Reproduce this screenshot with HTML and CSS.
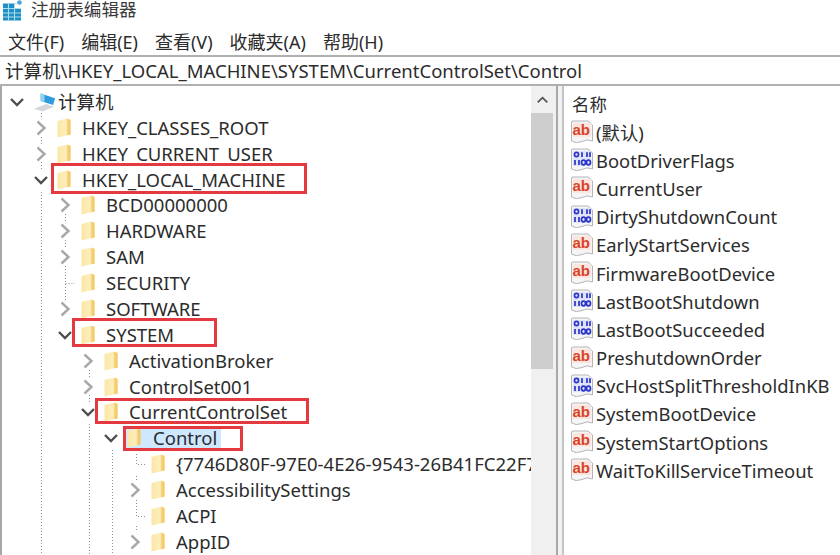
FILE: index.html
```html
<!DOCTYPE html>
<html lang="zh-CN">
<head>
<meta charset="utf-8">
<title>注册表编辑器</title>
<link rel="stylesheet" href="styles.css">
</head>
<body>
<svg class="defs" width="0" height="0" aria-hidden="true">
  <defs>
    <linearGradient id="fg" x1="0" y1="0" x2="1" y2="0">
      <stop offset="0" stop-color="#fbe6a6"/><stop offset="0.6" stop-color="#fdeebb"/><stop offset="1" stop-color="#f6d27a"/>
    </linearGradient>
    <symbol id="folder" viewBox="0 0 14 20">
      <path d="M0.5 3 L6 1.5 L11 0.5 L13.5 2 L13.5 16.5 L0.5 19.5 Z" fill="url(#fg)"/>
      <path d="M10.5 1 L13.5 2 L13.5 16.5 L10.5 17.2 Z" fill="#f4cc6c"/>
    </symbol>
    <symbol id="chev-r" viewBox="0 0 12 16">
      <path d="M2.5 1.5 L9.5 8 L2.5 14.5" fill="none" stroke="#a8a8a8" stroke-width="2.4"/>
    </symbol>
    <symbol id="chev-d" viewBox="0 0 16 12">
      <path d="M2 3 L8 9 L14 3" fill="none" stroke="#4e4e4e" stroke-width="2.4"/>
    </symbol>
    <symbol id="reg-paper" viewBox="0 0 24 24">
      <path d="M1.5 2 Q1.5 1 3 1 L18 1 L22.5 5 L22.5 21 Q17 18.5 12 21.5 Q6 24 1.5 21 Z" fill="#f5f5f7" stroke="#b5b5b8" stroke-width="1"/>
    </symbol>
    <symbol id="reg-sz" viewBox="0 0 24 24">
      <use href="#reg-paper"/>
      <rect x="3" y="3" width="18" height="14" fill="#fbe6df"/>
      <text x="2.5" y="15" class="ab-text">ab</text>
    </symbol>
    <symbol id="reg-bin" viewBox="0 0 24 24">
      <use href="#reg-paper"/>
      <rect x="3" y="3" width="18" height="15" fill="#dfe3fa"/>
      <g fill="none" stroke="#2a35c8" stroke-width="1.7">
        <ellipse cx="6.5" cy="6.5" rx="2" ry="2.2"/>
        <path d="M12 4.2 V9 M17 4.2 V9 M20 4.2 V9"/>
        <path d="M5 12 V17 M9 12 V17"/>
        <ellipse cx="13.5" cy="14.5" rx="2" ry="2.3"/>
        <ellipse cx="18.5" cy="14.5" rx="2" ry="2.3"/>
      </g>
    </symbol>
  </defs>
</svg>

<header class="titlebar">
  <svg class="app-icon" viewBox="0 0 20 21" width="20" height="21" aria-hidden="true">
    <rect x="1" y="3.5" width="18" height="17" fill="#1e8fc4"/>
    <path d="M1 8.5 H19 M1 13 H19 M1 17 H19 M6.5 3.5 V20.5 M12.5 3.5 V20.5" stroke="#a9dcef" stroke-width="1.1"/>
    <rect x="13" y="3.5" width="6" height="4.5" fill="#fff"/>
    <circle cx="17.5" cy="2.5" r="2.3" fill="#4aa7d6"/>
  </svg>
  <span class="title-text">注册表编辑器</span>
</header>

<nav class="menubar">
  <span>文件(F)</span><span>编辑(E)</span><span>查看(V)</span><span>收藏夹(A)</span><span>帮助(H)</span>
</nav>

<div class="address">计算机\HKEY_LOCAL_MACHINE\SYSTEM\CurrentControlSet\Control</div>

<main class="panes">
  <section class="tree">
    <svg class="guides" width="531" height="470" aria-hidden="true">
      <g fill="none" stroke="#8e8e8e" stroke-dasharray="1 2">
        <path d="M41.5 27 V33 M41.5 51 V58 M41.5 76 V84 M41.5 106 V470"/>
        <path d="M65.5 128 V136 M65.5 154 V162 M65.5 180 V215 M65.5 197.5 H75"/>
        <path d="M89.5 284 V291 M89.5 309 V317 M89.5 338 V470"/>
        <path d="M112.5 364 V470"/>
        <path d="M136.5 368 V378.5 H146 M136.5 390 V396 M136.5 414 V430.5 H146 M136.5 440 V446"/>
      </g>
    </svg>

    <div class="row root">
      <svg class="chev"><use href="#chev-d"/></svg>
      <svg class="pc" viewBox="0 0 24 20" width="23" height="20" aria-hidden="true">
        <path d="M8 1 L23 6 L21 13 L8 9 Z" fill="#2f9bdc"/>
        <path d="M8 1 L12 2 L12 10 L8 9 Z" fill="#8fd2f2"/>
        <path d="M1 17 L14 12 L22 15 L10 20 Z" fill="#d4d8dc"/>
      </svg>
      <span class="label">计算机</span>
    </div>

    <div class="row l1"><svg class="chev"><use href="#chev-r"/></svg><svg class="folder"><use href="#folder"/></svg><span class="label">HKEY_CLASSES_ROOT</span></div>
    <div class="row l1"><svg class="chev"><use href="#chev-r"/></svg><svg class="folder"><use href="#folder"/></svg><span class="label">HKEY_CURRENT_USER</span></div>
    <div class="row l1"><svg class="chev"><use href="#chev-d"/></svg><svg class="folder"><use href="#folder"/></svg><span class="label">HKEY_LOCAL_MACHINE</span><i class="mark m-hklm"></i></div>
    <div class="row l2"><svg class="chev"><use href="#chev-r"/></svg><svg class="folder"><use href="#folder"/></svg><span class="label">BCD00000000</span></div>
    <div class="row l2"><svg class="chev"><use href="#chev-r"/></svg><svg class="folder"><use href="#folder"/></svg><span class="label">HARDWARE</span></div>
    <div class="row l2"><svg class="chev"><use href="#chev-r"/></svg><svg class="folder"><use href="#folder"/></svg><span class="label">SAM</span></div>
    <div class="row l2"><span class="chev"></span><svg class="folder"><use href="#folder"/></svg><span class="label">SECURITY</span></div>
    <div class="row l2"><svg class="chev"><use href="#chev-r"/></svg><svg class="folder"><use href="#folder"/></svg><span class="label">SOFTWARE</span></div>
    <div class="row l2"><svg class="chev"><use href="#chev-d"/></svg><svg class="folder"><use href="#folder"/></svg><span class="label">SYSTEM</span><i class="mark m-system"></i></div>
    <div class="row l3"><svg class="chev"><use href="#chev-r"/></svg><svg class="folder"><use href="#folder"/></svg><span class="label">ActivationBroker</span></div>
    <div class="row l3"><svg class="chev"><use href="#chev-r"/></svg><svg class="folder"><use href="#folder"/></svg><span class="label">ControlSet001</span></div>
    <div class="row l3"><svg class="chev"><use href="#chev-d"/></svg><svg class="folder"><use href="#folder"/></svg><span class="label">CurrentControlSet</span><i class="mark m-ccs"></i></div>
    <div class="row l4"><svg class="chev"><use href="#chev-d"/></svg><span class="selected"><svg class="folder"><use href="#folder"/></svg><span class="label">Control</span></span><i class="mark m-control"></i></div>
    <div class="row l5"><span class="chev"></span><svg class="folder"><use href="#folder"/></svg><span class="label">{7746D80F-97E0-4E26-9543-26B41FC22F79}</span></div>
    <div class="row l5"><svg class="chev"><use href="#chev-r"/></svg><svg class="folder"><use href="#folder"/></svg><span class="label">AccessibilitySettings</span></div>
    <div class="row l5"><span class="chev"></span><svg class="folder"><use href="#folder"/></svg><span class="label">ACPI</span></div>
    <div class="row l5"><svg class="chev"><use href="#chev-r"/></svg><svg class="folder"><use href="#folder"/></svg><span class="label">AppID</span></div>
  </section>

  <div class="scrollbar">
    <div class="sb-arrow"><svg viewBox="0 0 16 10" width="13" height="8" aria-hidden="true"><path d="M2 8 L8 2 L14 8" fill="none" stroke="#505050" stroke-width="2"/></svg></div>
    <div class="sb-thumb"></div>
  </div>
  <div class="splitter"></div>

  <section class="values">
    <div class="values-head">名称</div>
    <ul class="value-list">
      <li><svg class="reg"><use href="#reg-sz"/></svg>(默认)</li>
      <li><svg class="reg"><use href="#reg-bin"/></svg>BootDriverFlags</li>
      <li><svg class="reg"><use href="#reg-sz"/></svg>CurrentUser</li>
      <li><svg class="reg"><use href="#reg-bin"/></svg>DirtyShutdownCount</li>
      <li><svg class="reg"><use href="#reg-sz"/></svg>EarlyStartServices</li>
      <li><svg class="reg"><use href="#reg-sz"/></svg>FirmwareBootDevice</li>
      <li><svg class="reg"><use href="#reg-bin"/></svg>LastBootShutdown</li>
      <li><svg class="reg"><use href="#reg-bin"/></svg>LastBootSucceeded</li>
      <li><svg class="reg"><use href="#reg-sz"/></svg>PreshutdownOrder</li>
      <li><svg class="reg"><use href="#reg-bin"/></svg>SvcHostSplitThresholdInKB</li>
      <li><svg class="reg"><use href="#reg-sz"/></svg>SystemBootDevice</li>
      <li><svg class="reg"><use href="#reg-sz"/></svg>SystemStartOptions</li>
      <li><svg class="reg"><use href="#reg-sz"/></svg>WaitToKillServiceTimeout</li>
    </ul>
  </section>
</main>
</body>
</html>
```

FILE: styles.css
```css
* { box-sizing: border-box; }
html, body { margin: 0; padding: 0; }
body {
  width: 840px;
  height: 555px;
  overflow: hidden;
  background: #fff;
  color: #2c2c2c;
  font-family: "Noto Sans", "Noto Sans CJK SC", sans-serif;
  font-size: 18.5px;
  display: flex;
  flex-direction: column;
}
.defs { position: absolute; }
.ab-text { font: bold 15px "Liberation Sans", sans-serif; fill: #d8432a; }

.titlebar {
  height: 26px;
  display: flex;
  align-items: flex-start;
  gap: 9px;
  padding-left: 2px;
  font-size: 17.6px;
  color: #3a3a3a;
}
.app-icon { flex: none; }
.title-text { line-height: 18px; }

.menubar {
  height: 29px;
  display: flex;
  align-items: center;
  gap: 17px;
  padding-left: 8px;
  font-size: 18px;
}

.address {
  height: 31px;
  border-top: 2px solid #b0b0b0;
  border-bottom: 2px solid #b0b0b0;
  padding-left: 5px;
  line-height: 27px;
  white-space: nowrap;
}

.panes {
  flex: 1;
  min-height: 0;
  display: flex;
}

.tree {
  position: relative;
  width: 531px;
  flex: none;
  padding-top: 3px;
  border-left: 2px solid #a8a8a8;
  overflow: hidden;
}
.guides { position: absolute; left: -2px; top: 0; }

.row {
  position: relative;
  height: 25.88px;
  display: flex;
  align-items: center;
  white-space: nowrap;
}
.chev {
  flex: none;
  width: 16px;
  height: 16px;
  margin-right: 8px;
}
.folder {
  flex: none;
  width: 14px;
  height: 20px;
}
.label { margin-left: 11px; line-height: 24px; }

.root { padding-left: 7px; }
.root .chev { width: 16px; height: 12px; margin-right: 0; }
.root .pc { flex: none; margin-left: 8px; }
.root .label { margin-left: 2px; }

.l1 { padding-left: 31px; }
.l2 { padding-left: 55px; }
.l3 { padding-left: 78px; }
.l4 { padding-left: 101px; }
.l5 { padding-left: 125px; }

.selected {
  display: flex;
  align-items: center;
  height: 22px;
  background: #cde8ff;
  padding: 0 4px 0 2px;
  margin-left: -2px;
}
.selected .label { margin-left: 12px; }

.mark {
  position: absolute;
  border: 3px solid #e4393f;
  pointer-events: none;
}
.m-hklm { left: 49px; top: -4px; width: 256px; height: 31px; }
.m-system { left: 70px; top: -4px; width: 145px; height: 29px; }
.m-ccs { left: 93px; top: -2px; width: 214px; height: 26px; }
.m-control { left: 121px; top: 1px; width: 120px; height: 25px; }

.scrollbar {
  width: 25px;
  flex: none;
  background: #f0f0f0;
}
.sb-arrow {
  width: 22px;
  height: 27px;
  display: flex;
  align-items: center;
  justify-content: center;
}
.sb-thumb {
  width: 22px;
  height: 256px;
  background: #cdcdcd;
}

.splitter {
  width: 8px;
  flex: none;
  border-left: 2px solid #a8a8a8;
  border-right: 2px solid #c4c4c4;
  background: #f2f2f2;
}

.values { flex: 1; min-width: 0; padding-left: 1px; }
.values-head {
  height: 32px;
  padding-left: 7px;
  line-height: 36px;
  font-size: 17.4px;
}
.value-list {
  list-style: none;
  margin: 0;
  padding: 0 0 0 5px;
  font-size: 18.4px;
}
.value-list li {
  height: 28.2px;
  display: flex;
  align-items: center;
  gap: 2px;
  white-space: nowrap;
}
.reg { flex: none; width: 24px; height: 24px; }
```
